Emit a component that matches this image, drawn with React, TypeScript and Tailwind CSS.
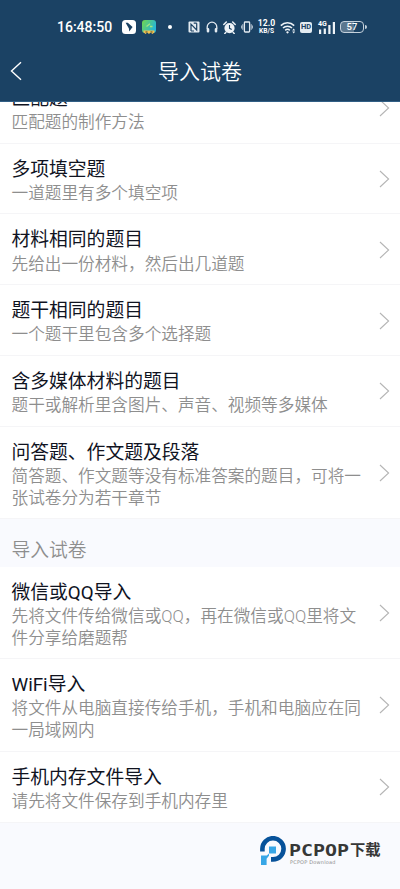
import React from 'react';

type Item = {
  title: string;
  lines: string[];
};

const questionTypes: Item[] = [
  { title: '匹配题', lines: ['匹配题的制作方法'] },
  { title: '多项填空题', lines: ['一道题里有多个填空项'] },
  { title: '材料相同的题目', lines: ['先给出一份材料，然后出几道题'] },
  { title: '题干相同的题目', lines: ['一个题干里包含多个选择题'] },
  { title: '含多媒体材料的题目', lines: ['题干或解析里含图片、声音、视频等多媒体'] },
  { title: '问答题、作文题及段落', lines: ['简答题、作文题等没有标准答案的题目，可将一', '张试卷分为若干章节'] },
];

const importMethods: Item[] = [
  { title: '微信或QQ导入', lines: ['先将文件传给微信或QQ，再在微信或QQ里将文', '件分享给磨题帮'] },
  { title: 'WiFi导入', lines: ['将文件从电脑直接传给手机，手机和电脑应在同', '一局域网内'] },
  { title: '手机内存文件导入', lines: ['请先将文件保存到手机内存里'] },
];

const StatusBar = () => (
  <div className="flex h-[54px] items-center pl-[57px] text-white">
    <span className="w-[65px] whitespace-nowrap text-[14px] font-medium leading-none">16:48:50</span>

    {/* Notification icons */}
    <svg className="mr-[6px] h-[14px] w-[14px] shrink-0" viewBox="0 0 14 14">
      <rect width="14" height="14" rx="3.5" fill="#fff" />
      <path d="M3.6 2.8h2.2l4.8 4.3-3.4 4.4-.3-3z" fill="#1b4264" />
    </svg>
    <svg className="mr-[12px] h-[14px] w-[14px] shrink-0" viewBox="0 0 14 14">
      <defs>
        <linearGradient id="app" x1="0" y1="0" x2="1" y2="0.5">
          <stop offset="0" stopColor="#73d64a" />
          <stop offset="1" stopColor="#25b5d8" />
        </linearGradient>
      </defs>
      <rect width="14" height="13" rx="3" fill="url(#app)" />
      <path d="M4.5 6.5L8 3.8M8 6.5h2.5" stroke="#a6e67c" strokeWidth="1.3" />
      <path d="M1.5 10.5h11v1.8L10.5 14l-2-1.4L7 14l-1.7-1.4L3.5 14l-2-1.7z" fill="#f5c451" />
      <path d="M3.5 12h2M8.5 12h2" stroke="#50412a" strokeWidth="1.2" />
    </svg>
    <span className="mr-[16px] h-[4px] w-[4px] shrink-0 rounded-full bg-white" />

    {/* System icons */}
    <svg className="mr-[6px] h-[12px] w-[12px] shrink-0" viewBox="0 0 12 12">
      <rect x="0.5" y="0.5" width="11" height="11" rx="1" fill="#e4ebf1" />
      <path d="M3 10V3.2L8.7 9V2.2M5.7 2.2h3M3 10h3" fill="none" stroke="#1b4264" strokeWidth="1.2" />
    </svg>
    <svg className="mr-[5px] h-[12px] w-[12px] shrink-0" viewBox="0 0 12 12" fill="none" stroke="#e4ebf1">
      <path d="M1.2 8V6a4.8 4.8 0 0 1 9.6 0v2" strokeWidth="1.3" />
      <path d="M2 8.3v2M10 8.3v2" strokeWidth="2.6" strokeLinecap="round" />
    </svg>
    <svg className="mr-[5px] h-[13px] w-[13px] shrink-0" viewBox="0 0 13 13" fill="none">
      <circle cx="6.5" cy="7.1" r="5.1" fill="#eef3f7" />
      <path d="M.8 3.5L3.3 1M12.2 3.5L9.7 1M2.8 11.5l-1 1M10.2 11.5l1 1" stroke="#eef3f7" strokeWidth="1.5" strokeLinecap="round" />
      <path d="M6.5 4v3.3l2.2 1.2" stroke="#1b4264" strokeWidth="1.1" />
    </svg>
    <svg className="mr-[4px] h-[12px] w-[12px] shrink-0" viewBox="0 0 12 12" fill="none" stroke="#e4ebf1">
      <rect x="3.4" y="1" width="5.2" height="10" rx="0.8" strokeWidth="1.3" />
      <path d="M1.8 3.2v5.6M10.2 3.2v5.6M.4 4.5v3M11.6 4.5v3" strokeWidth="0.8" />
    </svg>
    <span className="mr-[4px] flex w-[19px] shrink-0 flex-col items-center font-bold">
      <span className="text-[8.6px] leading-[9px]">12.0</span>
      <span className="text-[6.6px] leading-[7px]">KB/S</span>
    </span>
    <svg className="mr-[4px] h-[13px] w-[16px] shrink-0" viewBox="0 0 16 13" fill="none" stroke="#eef3f7">
      <path d="M.8 4.6a9.5 9.5 0 0 1 13.4 0M3 7.1a6.3 6.3 0 0 1 9 0M5.2 9.4a3.3 3.3 0 0 1 4.6 0" strokeWidth="1.5" />
      <circle cx="7.5" cy="11.3" r="0.9" fill="#eef3f7" strokeWidth="0.5" />
      <path d="M12.2 9.5l1.5-1.9 1.5 1.9zM12.2 10.5l1.5 1.9 1.5-1.9z" fill="#eef3f7" stroke="none" />
    </svg>
    <span className="mr-[6px] flex h-[11px] w-[12px] shrink-0 items-center justify-center rounded-[2px] bg-[#e4ebf1] text-[7.5px] font-bold leading-none text-[#1b4264]">
      HD
    </span>
    <span className="relative mr-[4px] h-[13px] w-[18px] shrink-0">
      <svg className="h-[13px] w-[18px]" viewBox="0 0 18 13" fill="#eef3f7">
        <path d="M1 8.5h2.2V13H1zM5.7 7.5h2.2V13H5.7zM10.3 4h2.2v9h-2.2zM14.8 1H17v12h-2.2z" />
      </svg>
      <span className="absolute -top-px left-0 text-[7px] font-bold leading-[8px]">4G</span>
    </span>
    <span className="flex h-[12px] w-[24px] shrink-0 items-center justify-center rounded-[4px] border border-[#c5d1dc] bg-[linear-gradient(90deg,#5b778f_57%,transparent_57%)] text-[9.5px] font-medium leading-none">
      57
    </span>
    <span className="ml-px h-[4px] w-[1.5px] rounded-r bg-[#c5d1dc]" />
  </div>
);

const TitleBar = () => (
  <div className="flex h-[47px] items-center pb-[13px]">
    <svg className="ml-[10px] h-[20px] w-[12px]" viewBox="0 0 12 20" fill="none" stroke="#fff" strokeWidth="1.4">
      <path d="M11 1.3L1.5 10 11 18.7" />
    </svg>
    <h1 className="flex-1 pr-[22px] pt-px text-center text-[21px] font-[350] leading-[30px] text-white">导入试卷</h1>
  </div>
);

const ListRow = ({ item }: { item: Item }) => (
  <div className="flex items-center border-b border-[#f5f5f7] bg-white pb-[9px] pl-[11.5px] pt-[13.9px]">
    <div className="flex-1">
      <h2 className="text-[18.8px] leading-[25.2px] text-[#10131f]">{item.title}</h2>
      {item.lines.map((line) => (
        <p key={line} className="whitespace-nowrap text-[16.65px] font-[350] leading-[21.7px] text-[#8e8e8e]">
          {line}
        </p>
      ))}
    </div>
    <svg className="-mt-[4px] mr-[10px] h-[18px] w-[11px] shrink-0" viewBox="0 0 11 18" fill="none" stroke="#b5b5b5" strokeWidth="1.1">
      <path d="M1 1l8.6 8L1 17" />
    </svg>
  </div>
);

const Watermark = () => (
  <div className="mr-[19px] mt-[13px] flex items-start justify-end">
    <svg className="h-[31px] w-[27px]" viewBox="0 0 27 31">
      <path d="M2.4 15.5v-2.7a10.6 10.6 0 1 1 10.6 10.6h-2" fill="none" stroke="#07529a" strokeWidth="4.6" />
      <path d="M9 10.5h7v7H9z" fill="#37a6e6" />
      <path d="M1 19.5h5.8L9 17.5v2.2l-2.4 3V29H1z" fill="#37a6e6" />
    </svg>
    <div className="ml-[2px] mt-[6px] w-[92px]">
      <div className="flex h-[17px] items-center whitespace-nowrap text-[#373737]">
        <svg className="h-[15px] w-[61px]" viewBox="0 0 61 15" role="img">
          <text x="0" y="12.5" textLength="60" lengthAdjust="spacingAndGlyphs" fill="#373737" className="font-['DejaVu_Sans_Mono',sans-serif] text-[15px] font-bold">
            PCPOP
          </text>
        </svg>
        <span className="text-[15.3px] font-bold leading-[17px]">下载</span>
      </div>
      <div className="pl-px font-['DejaVu_Sans',sans-serif] text-[5px] leading-[6px] tracking-[0.2px] text-[#8d8d8d]">PCPOP Download</div>
    </div>
  </div>
);

const App = () => {
  return (
    <main className="flex h-[889px] w-[400px] flex-col overflow-hidden bg-[#f9fafe] font-['Roboto','Noto_Sans_CJK_SC',sans-serif]">
      <header className="z-10 h-[102px] shrink-0 border-b border-[#315f85] bg-[#1b4264]">
        <StatusBar />
        <TitleBar />
      </header>

      {/* Scrolled list, the first row is partly under the header */}
      <div className="min-h-0 flex-1 overflow-hidden">
        <section className="-mt-[29.2px]">
          {questionTypes.map((item) => (
            <ListRow key={item.title} item={item} />
          ))}
        </section>
        <div className="flex h-[47.5px] items-center pl-[11.5px] pt-[15.5px] text-[18.8px] font-[350] leading-[26px] text-[#8e8e8e]">
          导入试卷
        </div>
        <section>
          {importMethods.map((item) => (
            <ListRow key={item.title} item={item} />
          ))}
        </section>
        <Watermark />
      </div>
    </main>
  );
};

export default App;
